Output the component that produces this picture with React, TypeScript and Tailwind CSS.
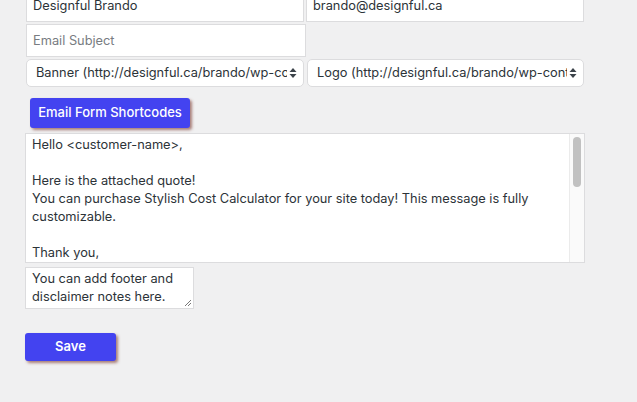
import React from "react";

const font = { fontFamily: "Inter, 'Noto Sans', 'Liberation Sans', sans-serif" };

function Arrows() {
  return (
    <svg width="8" height="12" viewBox="0 0 8 12" className="shrink-0">
      <path d="M4 1 L7.5 5 L0.5 5 Z" fill="#3c434a" />
      <path d="M4 11 L7.5 7 L0.5 7 Z" fill="#3c434a" />
    </svg>
  );
}

function FakeSelect({ text, w }: { text: string; w: string }) {
  return (
    <div
      className={`${w} h-[28px] bg-white border border-[#dcdcde] rounded-[5px] flex items-center pl-[9px] pr-[6px] gap-[2px]`}
    >
      <div className="flex-1 overflow-hidden whitespace-nowrap text-[12.8px] text-[#2c3338]">{text}</div>
      <Arrows />
    </div>
  );
}

export default function App() {
  return (
    <div className="w-[637px] h-[402px] overflow-hidden bg-[#f0f0f1] text-[#2c3338]" style={font}>
      <div className="pl-[25px] mt-[-10px] flex flex-col items-start">
        <div className="flex gap-[2px] ml-px">
          <div className="w-[278px] h-[32px] bg-white border border-[#dcdcde] flex items-center px-[6px] text-[12.8px]">
            Designful Brando
          </div>
          <div className="w-[278px] h-[32px] bg-white border border-[#dcdcde] flex items-center px-[6px] text-[12.8px]">
            brando@designful.ca
          </div>
        </div>
        <div className="mt-[2px] ml-px w-[280px] h-[33px] bg-white border border-[#dcdcde] flex items-center px-[6px] text-[12.8px] text-[#787c82]">
          Email Subject
        </div>
        <div className="mt-[2px] ml-px flex gap-[3px]">
          <FakeSelect w="w-[278px]" text="Banner (http://designful.ca/brando/wp-content/uploads/2023/banner.png)" />
          <FakeSelect w="w-[277px]" text="Logo (http://designful.ca/brando/wp-content/uploads/2023/logo.png)" />
        </div>
        <button className="mt-[11px] ml-[5px] w-[160px] h-[30px] bg-[#4343f0] text-white text-[13px] font-medium rounded-[3px] shadow-[2px_2px_3px_rgba(120,50,40,0.6)]">
          Email Form Shortcodes
        </button>
        <div className="mt-[5px] w-[560px] h-[130px] bg-white border border-[#dcdcde] flex">
          <div className="flex-1 overflow-hidden pl-[6px] pt-[2px] text-[12.8px] leading-[18px] whitespace-pre-wrap">
            {"Hello <customer-name>,\n\nHere is the attached quote!\nYou can purchase Stylish Cost Calculator for your site today! This message is fully customizable.\n\nThank you,\nDesignful Brando"}
          </div>
          <div className="w-[15px] border-l border-[#ebebeb] bg-[#fafafa] flex justify-center pt-[3px]">
            <div className="w-[8px] h-[50px] rounded-full bg-[#c1c1c1]" />
          </div>
        </div>
        <div className="relative mt-[4px] w-[169px] h-[42px] bg-white border border-[#dcdcde] pl-[6px] pt-[2px] text-[12.8px] leading-[18px]">
          You can add footer and disclaimer notes here.
          <svg width="8" height="8" viewBox="0 0 8 8" className="absolute right-[1px] bottom-[1px]">
            <path d="M7 1 L1 7 M7 4 L4 7" stroke="#555" strokeWidth="0.8" />
          </svg>
        </div>
        <button className="mt-[24px] w-[91px] h-[28px] bg-[#4343f0] text-white text-[13px] font-semibold rounded-[3px] shadow-[2px_2px_3px_rgba(120,50,40,0.6)]">
          Save
        </button>
      </div>
    </div>
  );
}
